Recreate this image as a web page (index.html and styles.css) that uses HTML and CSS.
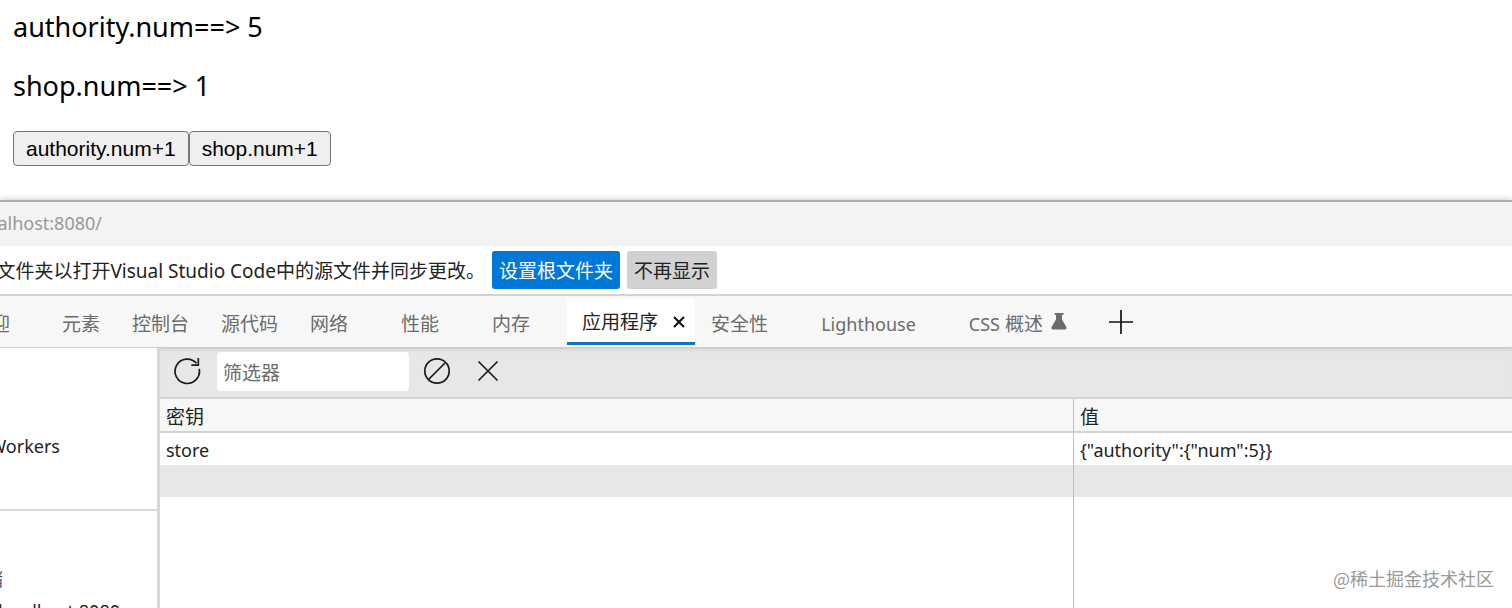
FILE: index.html
```html
<!DOCTYPE html>
<html lang="zh-CN">
<head>
<meta charset="utf-8">
<title>authority / shop</title>
<link rel="stylesheet" href="styles.css">
</head>
<body>
<main class="app">
  <p class="line">authority.num==&gt; 5</p>
  <p class="line">shop.num==&gt; 1</p>
  <div class="actions"><button type="button" class="native">authority.num+1</button><button type="button" class="native">shop.num+1</button></div>
</main>
<section class="devtools">
  <header class="titlebar"><span class="clip title-clip"><span>alhost:8080/</span></span></header>
  <div class="infobar">
    <span class="clip info-clip"><span>文件夹以打开Visual Studio Code中的源文件并同步更改。</span></span>
    <button type="button" class="btn primary">设置根文件夹</button>
    <button type="button" class="btn">不再显示</button>
  </div>
  <nav class="tabs">
    <button type="button" class="tab first clip"><span>迎</span></button>
    <button type="button" class="tab pinned">元素</button>
    <button type="button" class="tab pinned">控制台</button>
    <button type="button" class="tab pinned">源代码</button>
    <button type="button" class="tab">网络</button>
    <button type="button" class="tab">性能</button>
    <button type="button" class="tab">内存</button>
    <button type="button" class="tab active">应用程序
      <svg class="close" viewBox="0 0 12 12"><path d="M1 1L11 11M11 1L1 11" fill="none" stroke="#111" stroke-width="2"/></svg>
    </button>
    <button type="button" class="tab">安全性</button>
    <button type="button" class="tab latin">Lighthouse</button>
    <button type="button" class="tab last"><span><span class="latin">CSS</span> 概述</span>
      <svg class="flask" viewBox="0 0 16 17"><path d="M3.500 0H12.500V1.700H11V6.500L15.500 14.200Q16 16.500 14 16.500H2Q0 16.500 .5 14.200L5 6.500V1.700H3.500Z" fill="#6b6b6b"/></svg>
    </button>
    <button type="button" class="add" aria-label="更多工具"><svg class="plus" viewBox="0 0 24 24"><path d="M12 0V24M0 12H24" stroke="#111" stroke-width="1.700"/></svg></button>
  </nav>
  <div class="panel">
    <aside class="sidebar">
      <div class="group app-group"><span class="clip worker-clip"><span>Workers</span></span></div>
      <div class="group store-group">
        <span class="clip storage-clip"><span>储</span></span>
        <span class="clip host-clip"><span>localhost:8080</span></span>
      </div>
    </aside>
    <div class="content">
      <div class="toolbar">
        <button type="button" class="icon" aria-label="刷新"><svg viewBox="0 0 28 28"><path d="M26.200 11.800A12.200 12.200 0 1 1 23.500 6.300M25.300 1V8.200H18.300" fill="none" stroke="#1a1a1a" stroke-width="1.700"/></svg></button>
        <input class="filter" type="text" placeholder="筛选器" aria-label="筛选器">
        <button type="button" class="icon" aria-label="全部清除"><svg viewBox="0 0 28 28"><circle cx="14" cy="14" r="12.200" fill="none" stroke="#1a1a1a" stroke-width="1.700"/><path d="M5.500 22.500L22.500 5.500" stroke="#1a1a1a" stroke-width="1.700"/></svg></button>
        <button type="button" class="icon" aria-label="删除所选项"><svg viewBox="0 0 28 28"><path d="M4.500 4.500L23.500 23.500M23.500 4.500L4.500 23.500" stroke="#1a1a1a" stroke-width="1.700"/></svg></button>
      </div>
      <table class="grid">
        <thead><tr><th class="key">密钥</th><th>值</th></tr></thead>
        <tbody>
          <tr><td>store</td><td>{"authority":{"num":5}}</td></tr>
          <tr class="alt"><td></td><td></td></tr>
          <tr class="rest"><td></td><td></td></tr>
        </tbody>
      </table>
    </div>
  </div>
</section>
<div class="watermark">@稀土掘金技术社区</div>
</body>
</html>
```
FILE: styles.css
```css
* { box-sizing: border-box; }
body {
  margin: 0;
  height: 100vh;
  overflow: hidden;
  display: flex;
  flex-direction: column;
  position: relative;
  background: #fff;
  color: #222;
  font: 18px/24px "Noto Sans", "Noto Sans CJK SC", sans-serif;
}
button { font: inherit; color: inherit; margin: 0; border: 0; background: none; white-space: nowrap; }
svg { display: block; flex: none; }
.clip { display: flex; justify-content: flex-end; overflow: hidden; white-space: nowrap; }
.clip > span { flex: none; }

.app { padding: 10px 13px 34px; color: #000; }
.line { margin: 0 0 25px; font-size: 27px; line-height: 34px; }
.line + .line { margin-bottom: 28px; }
.actions { display: flex; }
.native {
  height: 35px;
  padding: 0 12px;
  border: 1px solid #767676;
  border-radius: 4px;
  background: #efefef;
  font: 21px/28px "Liberation Sans", Arial, sans-serif;
}

.devtools {
  flex: 1;
  min-height: 0;
  display: flex;
  flex-direction: column;
  border-top: 2px solid #adadad;
  box-shadow: 0 -1px 6px #0000002e;
}
.titlebar { flex: none; height: 44px; padding-top: 9px; background: #f3f3f3; color: #999; }
.title-clip { width: 102px; }
.infobar {
  flex: none;
  display: flex;
  align-items: center;
  gap: 7px;
  height: 50px;
  border-bottom: 2px solid #d2d2d2;
  font-size: 19px;
}
.info-clip { width: 485px; padding-top: 2px; }
.btn { height: 38px; padding: 2px 7px 0; border-radius: 3px; background: #d2d2d2; font-size: 19px; }
.primary { background: #0078d7; color: #fff; }

.tabs {
  flex: none;
  display: flex;
  height: 52px;
  padding: 3px 0 2px;
  background: #f7f7f7;
  border-bottom: 1px solid #ccc;
  color: #6b6b6b;
}
.tab { display: flex; align-items: center; padding: 3px 37px 0 16px; font-size: 19px; }
.tab.pinned { padding-right: 16px; }
.tab.first { width: 46px; padding: 3px 36px 0 0; }
.tab.active { gap: 15px; padding: 3px 10px 0 15px; background: #fff; color: #222; border-bottom: 3px solid #0f72c4; }
.latin, .tab.latin { font-size: 18px; }
.tab.last { padding-right: 0; }
.close { width: 12px; height: 12px; }
.flask { width: 16px; height: 17px; margin: 0 0 5px 8px; }
.add { padding: 0 6px; margin-left: 36px; }
.plus { width: 24px; height: 24px; }

.panel { flex: 1; min-height: 0; display: flex; }
.sidebar { flex: none; width: 160px; border-right: 3px solid #d2d7d7; overflow: hidden; }
.app-group { height: 163px; padding-top: 86px; border-bottom: 2px solid #d2dada; }
.worker-clip { width: 60px; }
.store-group { padding-top: 56px; }
.storage-clip { width: 3px; color: #3c5a80; }
.host-clip { width: 120px; margin-top: 8px; }
.content { flex: 1; min-width: 0; display: flex; flex-direction: column; }
.toolbar {
  flex: none;
  display: flex;
  align-items: center;
  height: 51px;
  padding: 0 13px 3px;
  background: #e7e7e7;
  border-bottom: 2px solid #d2d5d5;
  box-shadow: inset 0 4px 4px -3px #0002;
}
.icon { padding: 0; width: 28px; height: 28px; }
.icon svg { width: 28px; height: 28px; }
.icon + .icon { margin-left: 23px; }
.filter {
  width: 192px;
  height: 39px;
  margin: 0 14px 0 16px;
  padding: 4px 6px 0;
  border: 0;
  border-radius: 4px;
  background: #fff;
  font: inherit;
  font-size: 19px;
}
.filter::placeholder { color: #6b6b6b; opacity: 1; }
.grid { flex: 1; width: 100%; border-collapse: separate; border-spacing: 0; table-layout: fixed; }
.grid th, .grid td { height: 32px; padding: 1px 6px 0; text-align: left; font-weight: 400; line-height: 24px; }
.grid th { height: 34px; padding-top: 4px; background: #f7f7f7; border-bottom: 2px solid #d2d2d2; font-size: 19px; }
.grid .key { width: 67.6%; }
.grid tr > :first-child { border-right: 1px solid #bfbfbf; }
.alt td { background: #e7e7e7; }
.grid .rest td { height: 112px; }
.watermark { position: absolute; right: 18px; bottom: 18px; color: #999; font: 18px/24px "Noto Sans CJK SC", sans-serif; }
```
